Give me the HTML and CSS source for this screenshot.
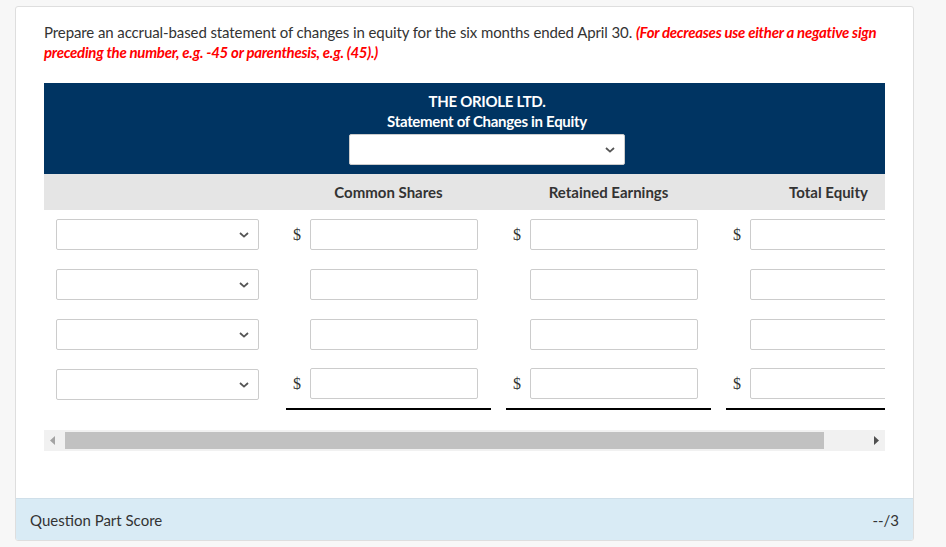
FILE: index.html
```html
<!DOCTYPE html>
<html>
<head>
<meta charset="utf-8">
<link rel="stylesheet" href="styles.css">
</head>
<body>
<div class="card">
  <div class="question">
    <p class="intro">Prepare an accrual-based statement of changes in equity for the six months ended April 30. <span class="hint">(For decreases use either a negative sign preceding the number, e.g. -45 or parenthesis, e.g. (45).)</span></p>
    <div class="sheet">
      <div class="sheet-scroll">
        <div class="sheet-inner">
          <div class="sheet-head">
            <div class="title">THE ORIOLE LTD.</div>
            <div class="title">Statement of Changes in Equity</div>
            <div class="select select-wide"><svg class="chev" width="10" height="6" viewBox="0 0 10 6"><path d="M1 1 L5 4.6 L9 1" fill="none" stroke="#555" stroke-width="1.8"/></svg></div>
          </div>
          <div class="col-heads">
            <div></div>
            <div class="ch">Common Shares</div>
            <div class="ch">Retained Earnings</div>
            <div class="ch">Total Equity</div>
          </div>
          <div class="row">
            <div class="lbl"><div class="select"><svg class="chev" width="10" height="6" viewBox="0 0 10 6"><path d="M1 1 L5 4.6 L9 1" fill="none" stroke="#555" stroke-width="1.8"/></svg></div></div>
            <div class="amt"><span class="dollar">$</span><div class="input"></div></div>
            <div class="amt"><span class="dollar">$</span><div class="input"></div></div>
            <div class="amt"><span class="dollar">$</span><div class="input"></div></div>
          </div>
          <div class="row">
            <div class="lbl"><div class="select"><svg class="chev" width="10" height="6" viewBox="0 0 10 6"><path d="M1 1 L5 4.6 L9 1" fill="none" stroke="#555" stroke-width="1.8"/></svg></div></div>
            <div class="amt"><span class="dollar"></span><div class="input"></div></div>
            <div class="amt"><span class="dollar"></span><div class="input"></div></div>
            <div class="amt"><span class="dollar"></span><div class="input"></div></div>
          </div>
          <div class="row">
            <div class="lbl"><div class="select"><svg class="chev" width="10" height="6" viewBox="0 0 10 6"><path d="M1 1 L5 4.6 L9 1" fill="none" stroke="#555" stroke-width="1.8"/></svg></div></div>
            <div class="amt"><span class="dollar"></span><div class="input"></div></div>
            <div class="amt"><span class="dollar"></span><div class="input"></div></div>
            <div class="amt"><span class="dollar"></span><div class="input"></div></div>
          </div>
          <div class="row row-total">
            <div class="lbl"><div class="select"><svg class="chev" width="10" height="6" viewBox="0 0 10 6"><path d="M1 1 L5 4.6 L9 1" fill="none" stroke="#555" stroke-width="1.8"/></svg></div></div>
            <div class="amt"><span class="dollar">$</span><div class="input"></div></div>
            <div class="amt"><span class="dollar">$</span><div class="input"></div></div>
            <div class="amt"><span class="dollar">$</span><div class="input"></div></div>
          </div>
        </div>
      </div>
      <div class="hscroll">
        <div class="sb-btn"><svg width="5" height="9" viewBox="0 0 5 9"><path d="M5 0 L0 4.5 L5 9 Z" fill="#a3a3a3"/></svg></div>
        <div class="sb-track"><div class="sb-thumb"></div></div>
        <div class="sb-btn"><svg width="5" height="9" viewBox="0 0 5 9"><path d="M0 0 L5 4.5 L0 9 Z" fill="#505050"/></svg></div>
      </div>
    </div>
  </div>
  <div class="score">
    <span>Question Part Score</span>
    <span>--/3</span>
  </div>
</div>
</body>
</html>
```

FILE: styles.css
```css
* { box-sizing: border-box; }
html, body { margin: 0; padding: 0; }
body {
  background: #f7f7f7;
  font-family: Lato, "Open Sans", Arial, sans-serif;
  color: #333;
  font-size: 15px;
  padding: 6px 0 0 15px;
}
.card {
  width: 899px;
  height: 535px;
  background: #fff;
  border: 1px solid #dedede;
  border-radius: 3px;
  display: flex;
  flex-direction: column;
  overflow: hidden;
}
.question {
  flex: 1;
  padding: 15px 28px 0 28px;
}
.intro {
  margin: 0;
  line-height: 20px;
  font-size: 15px;
  letter-spacing: -0.1px;
  color: #333;
}
.hint {
  color: #f00;
  font-weight: 700;
  font-style: italic;
  letter-spacing: -0.27px;
}
.sheet {
  margin-top: 21px;
  width: 841px;
}
.sheet-scroll {
  width: 841px;
  overflow: hidden;
}
.sheet-inner {
  width: 902px;
}
.sheet-head {
  width: 886px;
  background: #003462;
  color: #fff;
  padding: 8px 0 9px;
  display: flex;
  flex-direction: column;
  align-items: center;
}
.title {
  font-weight: 700;
  line-height: 20px;
  font-size: 15px;
  letter-spacing: -0.3px;
}
.select {
  height: 31px;
  width: 203px;
  border: 1px solid #ccc;
  border-radius: 2px;
  background: #fff;
  display: flex;
  align-items: center;
  justify-content: flex-end;
  padding-right: 9px;
}
.select-wide {
  width: 276px;
  margin-top: 3px;
}
.chev { display: block; }
.col-heads {
  display: grid;
  grid-template-columns: 242px 220px 220px 220px;
  background: #e5e5e5;
  height: 36px;
  align-items: center;
}
.ch {
  width: 205px;
  text-align: center;
  font-weight: 700;
  color: #333;
  font-size: 15px;
  letter-spacing: 0;
}
.row {
  display: grid;
  grid-template-columns: 242px 220px 220px 220px;
  padding: 9px 0 10px;
  align-items: start;
}
.row-total { padding-bottom: 0; }
.lbl {
  padding-left: 12px;
}
.amt {
  width: 205px;
  display: flex;
  align-items: center;
}
.dollar {
  width: 24px;
  padding-left: 7px;
  font-family: "Liberation Serif", "Times New Roman", serif;
  font-size: 16px;
  color: #333;
}
.input {
  width: 168px;
  height: 31px;
  border: 1px solid #ccc;
  border-radius: 2px;
  background: #fff;
}
.row-total .amt {
  margin-top: -1px;
  padding-bottom: 9px;
  border-bottom: 2px solid #000;
}
.hscroll {
  margin-top: 20px;
  height: 21px;
  background: #f1f1f1;
  display: flex;
  align-items: center;
}
.sb-btn {
  width: 17px;
  height: 21px;
  display: flex;
  align-items: center;
  justify-content: center;
}
.sb-btn svg { display: block; }
.sb-track {
  flex: 1;
  height: 17px;
  padding-left: 4px;
}
.sb-thumb {
  width: 759px;
  height: 17px;
  background: #c1c1c1;
}
.score {
  height: 42px;
  background: #d9ebf5;
  border-top: 1px solid #cfdfe9;
  display: flex;
  justify-content: space-between;
  align-items: center;
  padding: 0 14px;
  font-size: 15px;
  color: #333;
}
```
